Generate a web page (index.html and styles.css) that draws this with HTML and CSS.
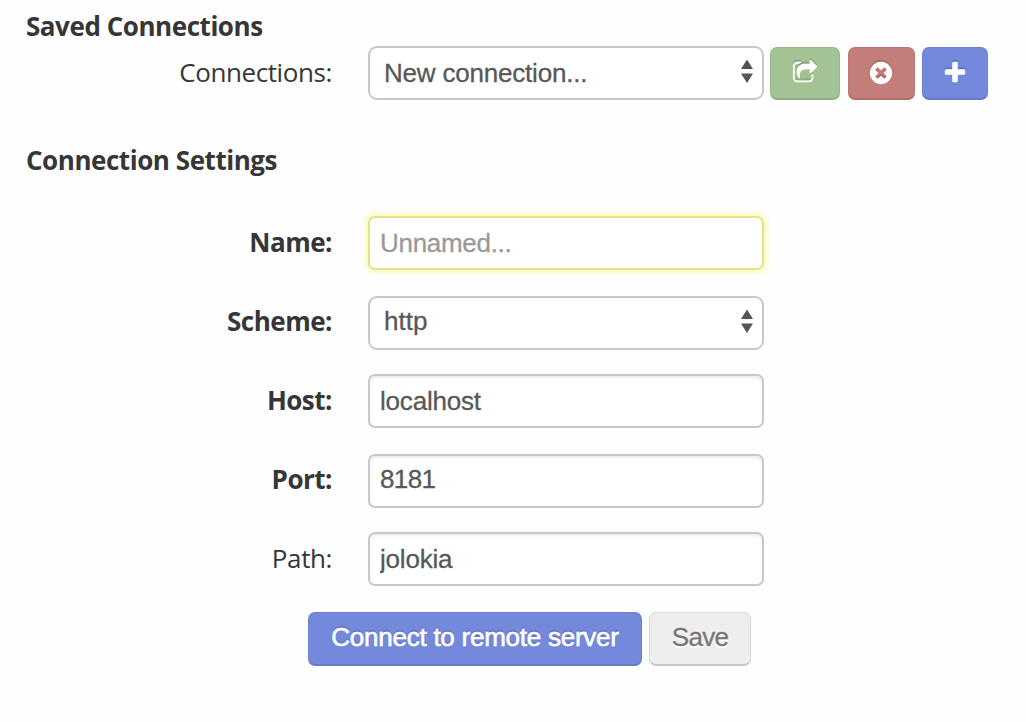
FILE: index.html
```html
<!DOCTYPE html>
<html lang="en">
<head>
<meta charset="utf-8">
<title>Connect</title>
<link rel="stylesheet" href="styles.css">
</head>
<body>
<main class="page">
  <section class="saved">
    <h2 class="heading">Saved Connections</h2>
    <div class="row">
      <label class="label" for="connections">Connections:</label>
      <div class="select-wrap">
        <select class="field select" id="connections"><option>New connection...</option></select>
        <svg class="arrows" viewBox="0 0 12 24"><path d="M6 0.5 12 10H0zM0 14.5h12L6 24z"/></svg>
      </div>
      <div class="tools">
        <button class="btn tool open" aria-label="Open"><svg class="icon" viewBox="0 0 1792 1792"><path d="M1472 989v259q0 119-84.5 203.5t-203.5 84.5h-832q-119 0-203.5-84.5t-84.5-203.5v-832q0-119 84.5-203.5t203.5-84.5h255q13 0 22.5 9.5t9.5 22.5q0 27-26 32-77 26-133 60-10 4-16 4h-112q-66 0-113 47t-47 113v832q0 66 47 113t113 47h832q66 0 113-47t47-113v-214q0-19 18-29 28-13 54-37 16-16 35-8 21 9 21 29zm237-496l-384 384q-18 19-45 19-12 0-25-5-39-17-39-59v-192h-160q-323 0-438 131-119 137-74 473 3 23-20 34-8 2-12 2-16 0-26-13-10-14-21-31t-39.5-68.5-49.5-99.5-38.5-114-17.5-122q0-49 3.5-91t14-90 28-88 47-81.5 68.5-74 94.5-61.5 124.5-48.5 159.5-30.5 196.5-11h160v-192q0-42 39-59 13-5 25-5 26 0 45 19l384 384q19 19 19 45t-19 45z"/></svg></button>
        <button class="btn tool remove" aria-label="Delete"><svg class="icon" viewBox="0 0 1792 1792"><path d="M1277 1122q0-26-19-45l-181-181 181-181q19-19 19-45 0-27-19-46l-90-90q-19-19-46-19-26 0-45 19l-181 181-181-181q-19-19-45-19-27 0-46 19l-90 90q-19 19-19 46 0 26 19 45l181 181-181 181q-19 19-19 45 0 27 19 46l90 90q19 19 46 19 26 0 45-19l181-181 181 181q19 19 45 19 27 0 46-19l90-90q19-19 19-46zm387-226q0 209-103 385.5t-279.5 279.5-385.5 103-385.5-103-279.5-279.5-103-385.5 103-385.5 279.5-279.5 385.5-103 385.5 103 279.5 279.5 103 385.5z"/></svg></button>
        <button class="btn tool add" aria-label="Add"><svg class="icon" viewBox="0 0 1792 1792"><path d="M1600 736v192q0 40-28 68t-68 28h-416v416q0 40-28 68t-68 28h-192q-40 0-68-28t-28-68v-416h-416q-40 0-68-28t-28-68v-192q0-40 28-68t68-28h416v-416q0-40 28-68t68-28h192q40 0 68 28t28 68v416h416q40 0 68 28t28 68z"/></svg></button>
      </div>
    </div>
  </section>
  <section class="settings">
    <h2 class="heading">Connection Settings</h2>
    <div class="row name-row">
      <label class="label required" for="name">Name:</label>
      <input class="field focused" id="name" placeholder="Unnamed...">
    </div>
    <div class="row scheme-row">
      <label class="label required" for="scheme">Scheme:</label>
      <div class="select-wrap">
        <select class="field select" id="scheme"><option>http</option></select>
        <svg class="arrows" viewBox="0 0 12 24"><path d="M6 0.5 12 10H0zM0 14.5h12L6 24z"/></svg>
      </div>
    </div>
    <div class="row host-row">
      <label class="label required" for="host">Host:</label>
      <input class="field" id="host" value="localhost">
    </div>
    <div class="row port-row">
      <label class="label required" for="port">Port:</label>
      <input class="field" id="port" value="8181">
    </div>
    <div class="row path-row">
      <label class="label" for="path">Path:</label>
      <input class="field" id="path" value="jolokia">
    </div>
    <div class="actions">
      <button class="btn connect">Connect to remote server</button>
      <button class="btn save">Save</button>
    </div>
  </section>
</main>
</body>
</html>
```
FILE: styles.css
```css
* { box-sizing: border-box; }
body {
  margin: 0;
  background: #fefefe;
  color: #363636;
  font: 26px/40px "Open Sans", sans-serif;
}
.page { height: 722px; padding: 6px 26px 0; overflow: hidden; }
.heading { margin: 0; font-size: 26px; line-height: 40px; font-weight: 700; letter-spacing: -0.45px; }
.row { display: flex; height: 54px; }
.label { width: 306px; margin-right: 36px; line-height: 52px; text-align: right; letter-spacing: -0.4px; }
.required { font-weight: 700; letter-spacing: -0.5px; }
.field {
  display: block;
  width: 396px;
  height: 54px;
  margin: 0;
  padding: 0 10px;
  border: 2px solid #c8c8c8;
  border-radius: 7px;
  background: #fff;
  box-shadow: inset 0 2px 3px rgba(0, 0, 0, .08);
  color: #585858;
  font: 26px/50px "Liberation Sans", Arial, sans-serif;
  letter-spacing: -0.2px;
  -webkit-text-stroke: 0.3px;
}
.field::placeholder { color: #999; opacity: 1; }
.focused { border-color: #e0e48a; box-shadow: 0 0 6px 1px rgba(245, 245, 90, .65); letter-spacing: -0.3px; }
.select-wrap { position: relative; }
.select { appearance: none; padding-left: 14px; border-radius: 9px; box-shadow: none; }
.arrows { position: absolute; top: 13px; right: 11px; width: 12px; height: 24px; fill: #555; }
.tools { display: flex; gap: 8px; margin: 1px 0 0 6px; }
.btn {
  height: 54px;
  margin: 0;
  padding: 0 0 3px;
  border: 1px solid rgba(0, 0, 0, .06);
  border-bottom: 2px solid rgba(0, 0, 0, .11);
  border-radius: 7px;
  color: #fff;
  font: 26px/48px "Liberation Sans", Arial, sans-serif;
  letter-spacing: -0.25px;
  text-align: center;
  text-shadow: 0 -2px 1px rgba(0, 0, 0, .12);
}
.tool { display: flex; align-items: center; justify-content: center; height: 53px; padding: 0; }
.icon { width: 26px; height: 26px; fill: #fff; filter: drop-shadow(0 -2px 0 rgba(0, 0, 0, .14)); }
.open { width: 70px; background: #a3c394; }
.remove { width: 67px; padding-right: 1px; background: #c47e7a; }
.add { width: 66px; margin-left: -1px; background: #7489db; }
.settings { margin-top: 40px; }
.name-row { margin-top: 36px; }
.scheme-row, .port-row { margin-top: 26px; }
.scheme-row .label, .port-row .label { line-height: 50px; }
.scheme-row .field, .port-row .field { padding-bottom: 3px; line-height: 47px; }
.scheme-row .field { letter-spacing: 0; }
.port-row .field { letter-spacing: -0.6px; }
.host-row, .path-row { margin-top: 24px; }
.actions { display: flex; gap: 7px; margin: 26px 0 0 282px; }
.connect { width: 334px; background: #7489db; -webkit-text-stroke: 0.6px; }
.save { width: 102px; border-color: #d8d8d8; border-bottom-color: #c9c9c9; background: #eee; color: #777; letter-spacing: -0.7px; text-shadow: 0 2px 1px #fff; -webkit-text-stroke: 0.3px; }
```
